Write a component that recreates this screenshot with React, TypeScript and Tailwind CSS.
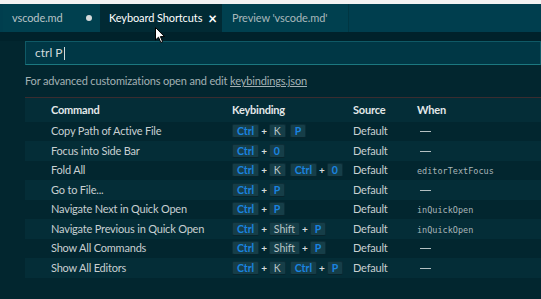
import React from "react";

type Key = { k: string; blue: boolean };
type Part = Key[];

const C = (k: string): Key => ({ k, blue: k !== "K" && k !== "Shift" });

const rows: { cmd: string; keys: Part[]; when: string | null }[] = [
  { cmd: "Copy Path of Active File", keys: [[C("Ctrl"), C("K")], [C("P")]], when: null },
  { cmd: "Focus into Side Bar", keys: [[C("Ctrl"), C("0")]], when: null },
  { cmd: "Fold All", keys: [[C("Ctrl"), C("K")], [C("Ctrl"), C("0")]], when: "editorTextFocus" },
  { cmd: "Go to File...", keys: [[C("Ctrl"), C("P")]], when: null },
  { cmd: "Navigate Next in Quick Open", keys: [[C("Ctrl"), C("P")]], when: "inQuickOpen" },
  { cmd: "Navigate Previous in Quick Open", keys: [[C("Ctrl"), C("Shift"), C("P")]], when: "inQuickOpen" },
  { cmd: "Show All Commands", keys: [[C("Ctrl"), C("Shift"), C("P")]], when: null },
  { cmd: "Show All Editors", keys: [[C("Ctrl"), C("K")], [C("Ctrl"), C("P")]], when: null },
];

function Cap({ k }: { k: Key }) {
  return (
    <span
      className={`inline-flex h-[14px] items-center justify-center rounded-[2px] border border-[#0c2e37] border-b-[#08242c] bg-[#163e48] px-[4px] text-[10.5px] leading-none tracking-normal ${
        k.blue ? "font-bold text-[#1a84e0]" : "text-[#b9c6c8]"
      }`}
    >
      {k.k}
    </span>
  );
}

function Keys({ parts }: { parts: Part[] }) {
  return (
    <div className="flex items-center gap-[4px]">
      {parts.map((p, i) => (
        <div key={i} className="flex items-center">
          {p.map((k, j) => (
            <React.Fragment key={j}>
              {j > 0 && <span className="mx-[2px] text-[10px] font-bold leading-none text-[#d6dcdd]">+</span>}
              <Cap k={k} />
            </React.Fragment>
          ))}
        </div>
      ))}
    </div>
  );
}

export default function App() {
  return (
    <div
      className="relative h-[299px] w-[541px] overflow-hidden bg-[#02262f] text-[11px] tracking-[-0.2px] text-[#c7cfd1]"
      style={{ fontFamily: 'Lato, "Liberation Sans", sans-serif' }}
    >
      <div className="h-[4px] bg-[#f2f2f2]" />
      {/* tab bar */}
      <div className="flex h-[28px] whitespace-nowrap bg-[#003e4e] pl-[3px] text-[11px] tracking-[-0.1px]">
        <div className="flex w-[97px] items-center justify-between bg-[#00404f] pl-[9px] pr-[8px] text-[#b7c3c6]">
          <span>vscode.md</span>
          <span className="h-[6px] w-[6px] rounded-full bg-[#d5dadb]" />
        </div>
        <div className="flex w-[122px] items-center bg-[#012a34] pl-[9px] text-white">
          <span>Keyboard Shortcuts</span>
          <span className="ml-[6px] text-[15px] font-bold leading-none">×</span>
        </div>
        <div className="flex w-[127px] items-center border-r border-[#003642] bg-[#00404f] pl-[10px] text-[#a9b8bb]">
          <span>Preview 'vscode.md'</span>
        </div>
      </div>
      <div className="h-[9px] bg-[#00222b]" />
      {/* search */}
      <div className="ml-[25px] flex h-[24px] items-center border border-[#0f5966] border-b-[#1b7880] bg-[#003745] pl-[9px] text-[12px] tracking-normal text-[#d3dadb]">
        <span>ctrl P</span>
        <span className="ml-[1px] h-[13px] w-[1px] bg-[#d3dadb]" />
      </div>
      <div className="ml-[25px] mt-[8px] tracking-[-0.15px] text-[#a3b1b4]">
        For advanced customizations open and edit <span className="underline">keybindings.json</span>
      </div>
      <div className="ml-[25px] mt-[7px] h-[1px] bg-[#3a2c2f]" />
      {/* table */}
      <div className="ml-[25px]">
        <div className="flex h-[24px] items-center bg-[#042d37] pt-[2px] font-bold text-[#e3e8e9]">
          <div className="w-[207px] pl-[26px]">Command</div>
          <div className="w-[121px]">Keybinding</div>
          <div className="w-[64px]">Source</div>
          <div>When</div>
        </div>
        {rows.map((r, i) => (
          <div
            key={i}
            className={`flex h-[19.5px] items-center ${i % 2 === 1 ? "bg-[#042d37]" : ""}`}
          >
            <div className="w-[207px] pl-[26px]">{r.cmd}</div>
            <div className="w-[121px]">
              <Keys parts={r.keys} />
            </div>
            <div className="w-[64px]">Default</div>
            <div className="text-[#a8b5b8]">
              {r.when ? (
                <span className="text-[8.5px] tracking-normal" style={{ fontFamily: '"DejaVu Sans Mono", monospace' }}>
                  {r.when}
                </span>
              ) : (
                <span className="ml-[3px] inline-block h-[1px] w-[11px] translate-y-[-3px] bg-[#b4c0c2]" />
              )}
            </div>
          </div>
        ))}
      </div>
      {/* mouse cursor */}
      <svg className="absolute left-[155px] top-[27px]" width="11" height="17" viewBox="0 0 11 17">
        <path d="M0.5 0.5 L0.5 13 L3.5 10.2 L5.8 15.5 L7.6 14.7 L5.4 9.6 L9.5 9.6 Z" fill="#fff" stroke="#000" strokeWidth="1" strokeLinejoin="round" />
      </svg>
    </div>
  );
}
